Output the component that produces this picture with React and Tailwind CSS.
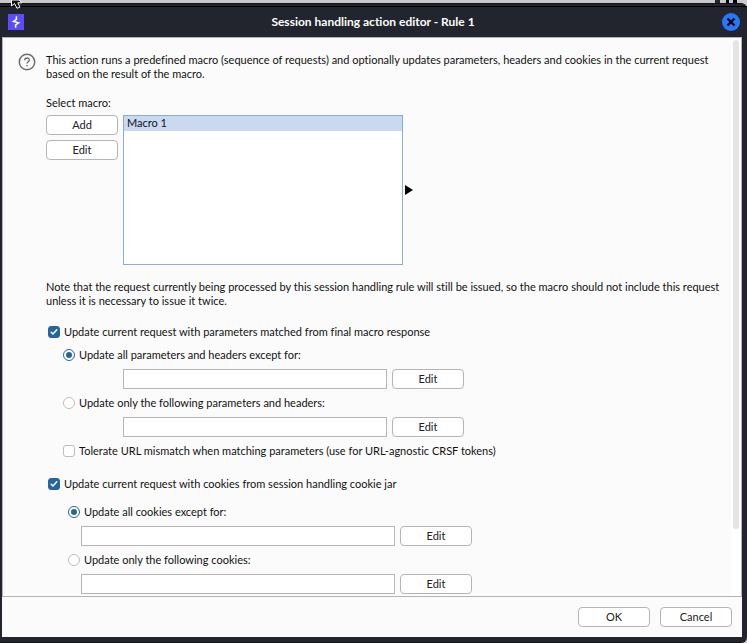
import React from "react";

const labelText = "text-[11px] leading-[14px]";

function PushButton({ children }) {
  return (
    <button
      type="button"
      className="h-5 w-[72px] shrink-0 rounded-[4px] border border-[#b9b3b5] bg-white text-[11px] leading-[14px] text-[#222]"
    >
      {children}
    </button>
  );
}

function Check({ label, checked }) {
  return (
    <label className={"flex items-center gap-1 " + labelText}>
      <span className="grid size-3">
        <input
          type="checkbox"
          defaultChecked={checked}
          className="peer col-start-1 row-start-1 size-3 appearance-none rounded-[3px] border border-[#bdbdbd] bg-white checked:border-[#2666a0] checked:bg-[#2666a0]"
        />
        <svg
          viewBox="0 0 12 12"
          className="pointer-events-none invisible col-start-1 row-start-1 size-3 peer-checked:visible"
          fill="none"
          stroke="white"
          strokeWidth="1.5"
          strokeLinecap="round"
          strokeLinejoin="round"
        >
          <path d="M3.2 6.3 L5 8 L8.8 3.8" />
        </svg>
      </span>
      {label}
    </label>
  );
}

function Radio({ label, name, checked }) {
  return (
    <label className={"flex items-center gap-1 " + labelText}>
      <span className="grid size-3 place-items-center">
        <input
          type="radio"
          name={name}
          defaultChecked={checked}
          className="peer col-start-1 row-start-1 size-3 appearance-none rounded-full border border-[#bdbdbd] bg-white checked:border-[#2666a0]"
        />
        <span className="pointer-events-none invisible col-start-1 row-start-1 size-1.5 rounded-full bg-[#2666a0] peer-checked:visible" />
      </span>
      {label}
    </label>
  );
}

function FieldRow({ label, wide }) {
  return (
    <div className="flex gap-[5px]">
      <input
        type="text"
        aria-label={label}
        className={
          "h-5 min-w-0 border border-[#b9b3b5] bg-white px-1 text-[11px] " +
          (wide ? "w-[314px]" : "w-[264px]")
        }
      />
      <PushButton>Edit</PushButton>
    </div>
  );
}

function TitleBar() {
  return (
    <header className="mt-0.5 flex h-[31px] items-center border-t border-black bg-[#23252e] pr-[7px] pl-2">
      <svg viewBox="0 0 16 16" className="size-4" aria-hidden="true">
        <rect width="16" height="16" fill="#5b4dff" />
        <path
          d="M8.4 2.2 V5.4 L5.4 7.4 L10.6 8.8 L7.6 10.8 V13.8"
          fill="none"
          stroke="white"
          strokeWidth="1.5"
        />
      </svg>
      <h1 className="flex-1 text-center text-xs font-bold text-white">
        Session handling action editor - Rule 1
      </h1>
      <button type="button" aria-label="Close" className="size-[18px]">
        <svg viewBox="0 0 18 18" className="size-[18px]">
          <circle cx="9" cy="9" r="9" fill="#2777ff" />
          <path d="M5.5 5.5 L12.5 12.5 M12.5 5.5 L5.5 12.5" stroke="#08080c" strokeWidth="2.4" />
        </svg>
      </button>
    </header>
  );
}

export default function App() {
  return (
    <div className="relative flex min-h-screen flex-col bg-[#c9c9c9] font-[Lato,sans-serif] text-[#111] [font-variant-ligatures:none]">
      <div className="flex h-[3px] justify-end bg-[#c9c9c9] pr-2.5" aria-hidden="true">
        <svg viewBox="0 0 22 3" className="h-[3px] w-[22px]">
          <path d="M0 0h5v3H0z" fill="#23252e" />
          <path d="M11 0h3v3h-3zM18 0h4v3h-4z" fill="#000" />
        </svg>
      </div>
      <svg
        viewBox="0 0 12 9"
        className="absolute top-0 left-[11px] z-10 h-[9px] w-3"
        aria-hidden="true"
      >
        <path
          d="M0.5 0 V6 L3.5 3.5 L6 8.3 L9 7 L6.8 2.8 H11 L8 0 Z"
          fill="#111"
          stroke="white"
          strokeWidth="1"
        />
      </svg>
      <main className="flex flex-1 flex-col rounded-tr-md rounded-br-md border-t border-b border-[#11131a] bg-[#23252e]">
        <TitleBar />
        <div className="mr-[5px] mb-[5px] ml-0.5 flex flex-1 flex-col bg-[#fbfbfb]">
          <div className="flex flex-1 border border-[#b9b3b5]">
            <section className="flex flex-1 items-start pt-[15px] pb-0.5 pl-[15px]">
              <button type="button" aria-label="Help" className="size-[18px] shrink-0">
                <svg viewBox="0 0 18 18" className="size-[18px]" fill="none" stroke="#6e6e6e">
                  <circle cx="9" cy="9" r="7.7" strokeWidth="1.5" />
                  <path d="M6.7 7.3 C6.7 4.2 11.5 4.3 11.3 7.2 C11.2 8.8 9 8.8 9 10.6" strokeWidth="1.4" />
                  <path d="M9 12 V13.3" strokeWidth="1.5" />
                </svg>
              </button>
              <div className="ml-2.5 flex-1">
                <p className={labelText}>
                  This action runs a predefined macro (sequence of requests) and optionally updates
                  parameters, headers and cookies in the current request
                  <br />
                  based on the result of the macro.
                </p>
                <h2 className={"mt-[15px] " + labelText}>Select macro:</h2>
                <div className="mt-[5px] flex">
                  <div className="flex flex-col gap-[5px]">
                    <PushButton>Add</PushButton>
                    <PushButton>Edit</PushButton>
                  </div>
                  <ul className="ml-[5px] h-[150px] w-[280px] border border-[#86aed9] bg-white">
                    <li className="h-[15px] bg-[#c9daf0] px-[3px] text-[11px] leading-[14px]">
                      Macro 1
                    </li>
                  </ul>
                  <svg viewBox="0 0 8 10" className="ml-0.5 h-2.5 w-2 self-center" aria-hidden="true">
                    <path d="M0 0 L8 5 L0 10 Z" fill="#000" />
                  </svg>
                </div>
                <p className={"mt-[15px] " + labelText}>
                  Note that the request currently being processed by this session handling rule will
                  still be issued, so the macro should not include this request
                  <br />
                  unless it is necessary to issue it twice.
                </p>
                <div className="mt-[17px] pl-0.5">
                  <Check label="Update current request with parameters matched from final macro response" checked />
                  <div className="mt-[9px] flex flex-col gap-[7px] pl-[15px]">
                    <Radio name="params" label="Update all parameters and headers except for:" checked />
                    <div className="pl-[60px]">
                      <FieldRow label="Excluded parameters and headers" />
                    </div>
                    <Radio name="params" label="Update only the following parameters and headers:" />
                    <div className="pl-[60px]">
                      <FieldRow label="Included parameters and headers" />
                    </div>
                    <Check label="Tolerate URL mismatch when matching parameters (use for URL-agnostic CRSF tokens)" />
                  </div>
                </div>
                <div className="mt-[19px] pl-0.5">
                  <Check label="Update current request with cookies from session handling cookie jar" checked />
                  <div className="mt-3.5 flex flex-col gap-[7px] pl-5">
                    <Radio name="cookies" label="Update all cookies except for:" checked />
                    <div className="pl-[13px]">
                      <FieldRow label="Excluded cookies" wide />
                    </div>
                    <Radio name="cookies" label="Update only the following cookies:" />
                    <div className="pl-[13px]">
                      <FieldRow label="Included cookies" wide />
                    </div>
                  </div>
                </div>
              </div>
            </section>
            <div className="flex w-2.5 flex-col bg-white px-0.5 pt-0.5" aria-hidden="true">
              <div className="h-[88%] rounded-full bg-[#e4e4e4]" />
            </div>
          </div>
          <footer className="flex h-10 items-center justify-end gap-2.5 pr-2.5">
            <PushButton>OK</PushButton>
            <PushButton>Cancel</PushButton>
          </footer>
        </div>
      </main>
    </div>
  );
}
